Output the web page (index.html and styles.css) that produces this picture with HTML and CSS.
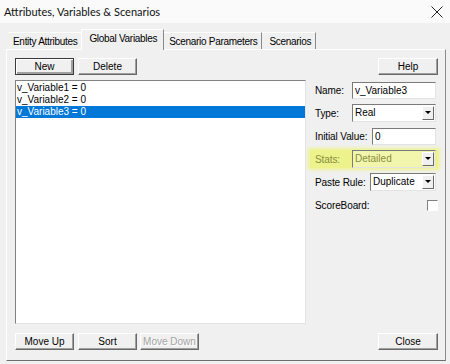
FILE: index.html
```html
<!DOCTYPE html>
<html>
  <head>
    <meta charset="utf-8">
    <title>Attributes, Variables &amp; Scenarios</title>
    <link rel="stylesheet" href="styles.css">
  </head>
  <body>
    <div class="window">
      <div class="titlebar">
        <span class="title">Attributes, Variables &amp; Scenarios</span>
        <svg class="close" width="12" height="12" viewBox="0 0 12 12">
          <path d="M0.5 0.5 L11.5 11.5 M11.5 0.5 L0.5 11.5" stroke="#222" stroke-width="1" fill="none"/>
        </svg>
      </div>

      <div class="tabs">
        <div class="tab first">Entity Attributes</div>
        <div class="tab active">Global Variables</div>
        <div class="tab">Scenario Parameters</div>
        <div class="tab">Scenarios</div>
      </div>

      <div class="panel">
        <div class="buttons">
          <button class="btn default">New</button>
          <button class="btn">Delete</button>
        </div>
        <div class="buttons end">
          <button class="btn wide">Help</button>
        </div>

        <div class="listbox">
          <div class="item">v_Variable1 = 0</div>
          <div class="item">v_Variable2 = 0</div>
          <div class="item selected">v_Variable3 = 0</div>
        </div>

        <div class="fields">
          <div class="field">
            <label>Name:</label>
            <div class="input w84">v_Variable3</div>
          </div>
          <div class="field">
            <label>Type:</label>
            <div class="select w84">Real<span class="arrow"></span></div>
          </div>
          <div class="field">
            <label>Initial Value:</label>
            <div class="input w64">0</div>
          </div>
          <div class="field highlight">
            <label>Stats:</label>
            <div class="select w84">Detailed<span class="arrow"></span></div>
          </div>
          <div class="field">
            <label>Paste Rule:</label>
            <div class="select w66">Duplicate<span class="arrow"></span></div>
          </div>
          <div class="field">
            <label>ScoreBoard:</label>
            <span class="check"></span>
          </div>
        </div>

        <div class="buttons bottom">
          <button class="btn">Move Up</button>
          <button class="btn">Sort</button>
          <button class="btn" disabled>Move Down</button>
        </div>
        <div class="buttons bottom end">
          <button class="btn wide">Close</button>
        </div>
      </div>
    </div>
  </body>
</html>
```

FILE: styles.css
```css
body {
  margin: 0;
  background: #f0f0f0;
  font-family: "Liberation Sans", Arial, sans-serif;
  font-size: 10px;
  color: #000;
}

.window {
  width: 450px;
  height: 364px;
}

.titlebar {
  height: 23px;
  display: flex;
  align-items: center;
  justify-content: space-between;
  padding: 0 7px 0 4px;
  background: #fafafa;
}
.title {
  font-family: Lato, sans-serif;
  font-size: 11px;
  color: #111;
}

/* tab strip */
.tabs {
  display: flex;
  align-items: flex-end;
  height: 20px;
  margin: 6px 0 0 8px;
}
.tab {
  height: 17px;
  line-height: 17px;
  padding: 0 4px 0 7px;
  letter-spacing: -0.3px;
  border-top: 1px solid #fff;
  border-right: 1px solid #8a8a8a;
  box-sizing: border-box;
  white-space: nowrap;
}
.tab.first {
  padding: 0 5px;
  border-right-color: transparent;
}
.tab.active {
  position: relative;
  z-index: 1;
  height: 21px;
  margin: 0 -2px -1px -2px;
  padding: 0 6px 2px 7px;
  line-height: 17px;
  background: #f0f0f0;
  border-left: 1px solid #fff;
}

/* page */
.panel {
  box-sizing: border-box;
  width: 440px;
  height: 312px;
  margin-left: 6px;
  padding: 8px 7px 10px 8px;
  border: 1px solid;
  border-color: #fff #8a8a8a #6d6d6d #fff;
  display: grid;
  grid-template-columns: 291px 1fr;
  grid-template-rows: auto 1fr auto;
}

.buttons { display: flex; gap: 4px; }
.buttons.end { justify-content: flex-end; }
.buttons.bottom { margin-top: 9px; gap: 3px; }
.buttons.bottom .btn + .btn { margin-left: 1px; }
.buttons.bottom .btn + .btn + .btn { margin-left: 0; }

.btn {
  width: 59px;
  height: 17px;
  padding: 0;
  font: inherit;
  color: #000;
  background: #f0f0f0;
  border: 1px solid;
  border-color: #fff #696969 #696969 #fff;
  box-shadow: inset -1px -1px #a0a0a0;
}
.btn.wide { width: 60px; }
.btn.default {
  border-color: #3a3a3a;
  box-shadow: inset 1px 1px #fff, inset -2px -2px #a0a0a0;
}
.btn:disabled { color: #a3a3a3; text-shadow: 1px 1px #fff; }

.listbox {
  margin-top: 5px;
  padding-top: 1px;
  background: #fff;
  border: 1px solid;
  border-color: #828282 #e3e3e3 #e3e3e3 #828282;
}
.item {
  height: 12px;
  line-height: 12px;
  padding-left: 1px;
  white-space: nowrap;
}
.item.selected { background: #0078d7; color: #fff; }

/* right column */
.fields {
  margin-top: 5px;
  padding: 1px 2px 0 9px;
  display: flex;
  flex-direction: column;
  gap: 5px;
}
.field {
  height: 18px;
  display: flex;
  align-items: center;
  justify-content: space-between;
}
.field label { letter-spacing: -0.1px; }

.field.highlight {
  margin: 0 -2px 0 -5px;
  padding: 0 2px 0 5px;
  background: #edf28c;
  box-shadow: 0 0 3px 2px #eef396;
  color: #878d3c;
}

.input, .select {
  box-sizing: border-box;
  height: 17px;
  line-height: 15px;
  padding-left: 2px;
  background: #fff;
  border: 1px solid;
  border-color: #7a7a7a #e3e3e3 #e3e3e3 #7a7a7a;
  white-space: nowrap;
}
.select {
  height: 18px;
  line-height: 16px;
  position: relative;
}
.highlight .select { background: #f2f6ac; }
.w84 { width: 84px; }
.w64 { width: 64px; }
.w66 { width: 66px; }

.arrow {
  position: absolute;
  top: 1px;
  right: 1px;
  width: 12px;
  height: 14px;
  box-sizing: border-box;
  background: #f0f0f0;
  border: 1px solid;
  border-color: #fff #696969 #696969 #fff;
}
.arrow::after {
  content: "";
  position: absolute;
  left: 2px;
  top: 4px;
  border: 3px solid transparent;
  border-top: 3px solid #000;
  border-bottom: 0;
}

.check {
  width: 11px;
  height: 11px;
  box-sizing: border-box;
  margin-right: -2px;
  background: #fff;
  border: 1px solid;
  border-color: #808080 #fff #fff #808080;
}
```
